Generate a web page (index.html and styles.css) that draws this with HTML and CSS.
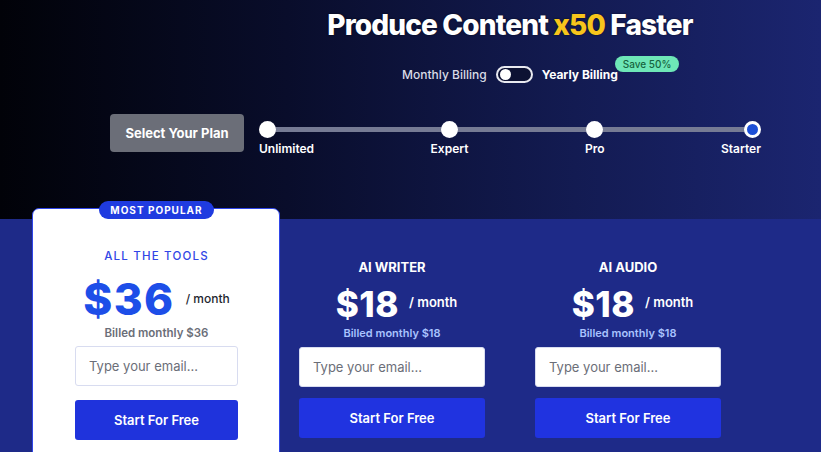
FILE: index.html
```html
<!DOCTYPE html>
<html>
  <head>
    <title>Pricing</title>
    <link rel="stylesheet" href="styles.css">
  </head>
  <body>
    <div class="hero">
      <div class="hero-head">
        <h1 class="title">Produce Content <span class="accent">x50</span> Faster</h1>
        <div class="billing">
          <span class="billing-label">Monthly Billing</span>
          <span class="toggle"><span class="knob"></span></span>
          <span class="billing-label yearly">Yearly Billing<span class="save">Save 50%</span></span>
        </div>
      </div>
      <div class="plan-row">
        <div class="select-btn">Select Your Plan</div>
        <div class="slider">
          <div class="stop first"><span class="dot"></span><span class="stop-label">Unlimited</span></div>
          <div class="stop"><span class="dot"></span><span class="stop-label">Expert</span></div>
          <div class="stop"><span class="dot"></span><span class="stop-label">Pro</span></div>
          <div class="stop last"><span class="dot active"></span><span class="stop-label">Starter</span></div>
        </div>
      </div>
    </div>

    <div class="band">
      <div class="plans">
        <div class="plan featured">
          <span class="badge">MOST POPULAR</span>
          <div class="plan-name">ALL THE TOOLS</div>
          <div class="price-row">
            <span class="price">$36</span>
            <span class="per">/ month</span>
          </div>
          <div class="billed">Billed monthly $36</div>
          <input class="email" type="text" placeholder="Type your email...">
          <button class="start-btn">Start For Free</button>
        </div>
        <div class="plan">
          <div class="plan-name">AI WRITER</div>
          <div class="price-row">
            <span class="price">$18</span>
            <span class="per">/ month</span>
          </div>
          <div class="billed">Billed monthly $18</div>
          <input class="email" type="text" placeholder="Type your email...">
          <button class="start-btn">Start For Free</button>
        </div>
        <div class="plan">
          <div class="plan-name">AI AUDIO</div>
          <div class="price-row">
            <span class="price">$18</span>
            <span class="per">/ month</span>
          </div>
          <div class="billed">Billed monthly $18</div>
          <input class="email" type="text" placeholder="Type your email...">
          <button class="start-btn">Start For Free</button>
        </div>
      </div>
    </div>
  </body>
</html>
```

FILE: styles.css
```css
* {
  box-sizing: border-box;
}
body {
  margin: 0;
  height: 452px;
  overflow: hidden;
  font-family: Inter, "Liberation Sans", sans-serif;
  background: #1e2a88;
}
.hero {
  height: 219px;
  padding-top: 8px;
  background: linear-gradient(to right, #010208 0%, #090d2b 35%, #131b52 70%, #1b2570 100%);
}
.hero-head {
  margin-left: 200px;
  width: 620px;
  text-align: center;
}
.title {
  margin: 0;
  font-size: 28px;
  line-height: 34px;
  font-weight: 800;
  color: #fff;
  letter-spacing: -0.85px;
  text-shadow: 0 0 2px rgba(0, 0, 0, 0.7);
}
.accent {
  color: #f7c51c;
}
.billing {
  display: flex;
  justify-content: center;
  align-items: center;
  gap: 9px;
  margin-top: 23px;
  height: 18px;
}
.billing-label {
  font-size: 12px;
  font-weight: 500;
  color: #d9dbe6;
}
.billing-label.yearly {
  position: relative;
  font-weight: 700;
  color: #fff;
}
.save {
  position: absolute;
  left: 73px;
  top: -11px;
  padding: 0 8px;
  height: 16px;
  line-height: 16px;
  border-radius: 8px;
  background: #6ee7b7;
  color: #17643f;
  font-size: 10px;
  font-weight: 500;
  white-space: nowrap;
}
.toggle {
  display: flex;
  align-items: center;
  width: 37px;
  height: 17px;
  padding: 0 2px;
  border: 2px solid #e8e9f0;
  border-radius: 9px;
  background: #0d1233;
}
.knob {
  width: 11px;
  height: 11px;
  border-radius: 50%;
  background: #fff;
}
.plan-row {
  display: flex;
  align-items: flex-start;
  gap: 15px;
  margin-left: 110px;
  margin-top: 31px;
}
.select-btn {
  width: 134px;
  height: 38px;
  line-height: 38px;
  text-align: center;
  border-radius: 4px;
  background: #6b6e78;
  color: #fff;
  font-size: 13px;
  font-weight: 700;
}
.slider {
  position: relative;
  display: flex;
  justify-content: space-between;
  width: 502px;
  margin-top: 7px;
}
.slider::before {
  content: "";
  position: absolute;
  left: 8px;
  right: 9px;
  top: 6px;
  height: 5px;
  background: #767b94;
}
.stop {
  position: relative;
  display: flex;
  flex-direction: column;
  align-items: center;
}
.stop.first {
  align-items: flex-start;
}
.stop.last {
  align-items: flex-end;
}
.dot {
  width: 17px;
  height: 17px;
  border-radius: 50%;
  background: #fff;
}
.dot.active {
  border: 3px solid #fff;
  background: #1d4fd6;
}
.stop-label {
  margin-top: 3px;
  font-size: 12px;
  line-height: 16px;
  font-weight: 600;
  color: #fff;
}
.band {
  padding-left: 38px;
}
.plans {
  display: grid;
  grid-template-columns: repeat(3, 236px);
  align-items: start;
}
.plan {
  display: flex;
  flex-direction: column;
  align-items: stretch;
  padding: 40px 25px 0;
  text-align: center;
}
.plan.featured {
  position: relative;
  margin: -11px -6px 0;
  height: 260px;
  padding: 39px 41px 0 42px;
  background: #fff;
  border: 1px solid #2f45e8;
  border-radius: 7px;
}
.badge {
  position: absolute;
  left: 66px;
  top: -8px;
  width: 115px;
  height: 18px;
  line-height: 18px;
  border-radius: 9px;
  background: #1f3be0;
  color: #fff;
  font-size: 10px;
  font-weight: 700;
  letter-spacing: 1px;
}
.plan-name {
  font-size: 13px;
  line-height: 16px;
  font-weight: 700;
  color: #fff;
}
.featured .plan-name {
  font-size: 11.5px;
  font-weight: 500;
  letter-spacing: 1.2px;
  color: #3146e6;
}
.price-row {
  display: flex;
  justify-content: center;
  align-items: center;
  gap: 10px;
  margin-top: 9px;
  margin-left: 9px;
  height: 40px;
}
.price {
  font-size: 35px;
  line-height: 1;
  font-weight: 800;
  color: #fff;
  letter-spacing: 0.5px;
}
.per {
  font-size: 13px;
  font-weight: 600;
  color: #fff;
  margin-top: -4px;
}
.featured .price-row {
  margin-top: 12px;
  margin-left: 0;
  height: 45px;
  gap: 11px;
}
.featured .price {
  font-size: 44px;
  letter-spacing: 1.5px;
  color: #1d4ee8;
}
.featured .per {
  font-size: 12px;
  font-weight: 500;
  color: #23262f;
  margin-top: 0;
}
.billed {
  margin-top: 2px;
  font-size: 11px;
  line-height: 14px;
  font-weight: 600;
  color: #a9c3ff;
}
.featured .billed {
  margin-top: 5px;
  font-size: 11.5px;
  line-height: 14px;
  color: #6b6e78;
}
.email {
  margin-top: 7px;
  height: 40px;
  padding: 0 13px;
  border: 1px solid #d8dcf0;
  border-radius: 3px;
  font-family: Inter, "Liberation Sans", sans-serif;
  font-size: 13px;
  color: #333;
  background: #fff;
}
.featured .email {
  margin-top: 6px;
}
.email::placeholder {
  color: #6b6e78;
}
.start-btn {
  margin-top: 11px;
  height: 40px;
  border: none;
  border-radius: 3px;
  background: #2033e0;
  color: #fff;
  font-family: Inter, "Liberation Sans", sans-serif;
  font-size: 13px;
  font-weight: 600;
}
.featured .start-btn {
  margin-top: 14px;
  background: #1f33dc;
}
```
